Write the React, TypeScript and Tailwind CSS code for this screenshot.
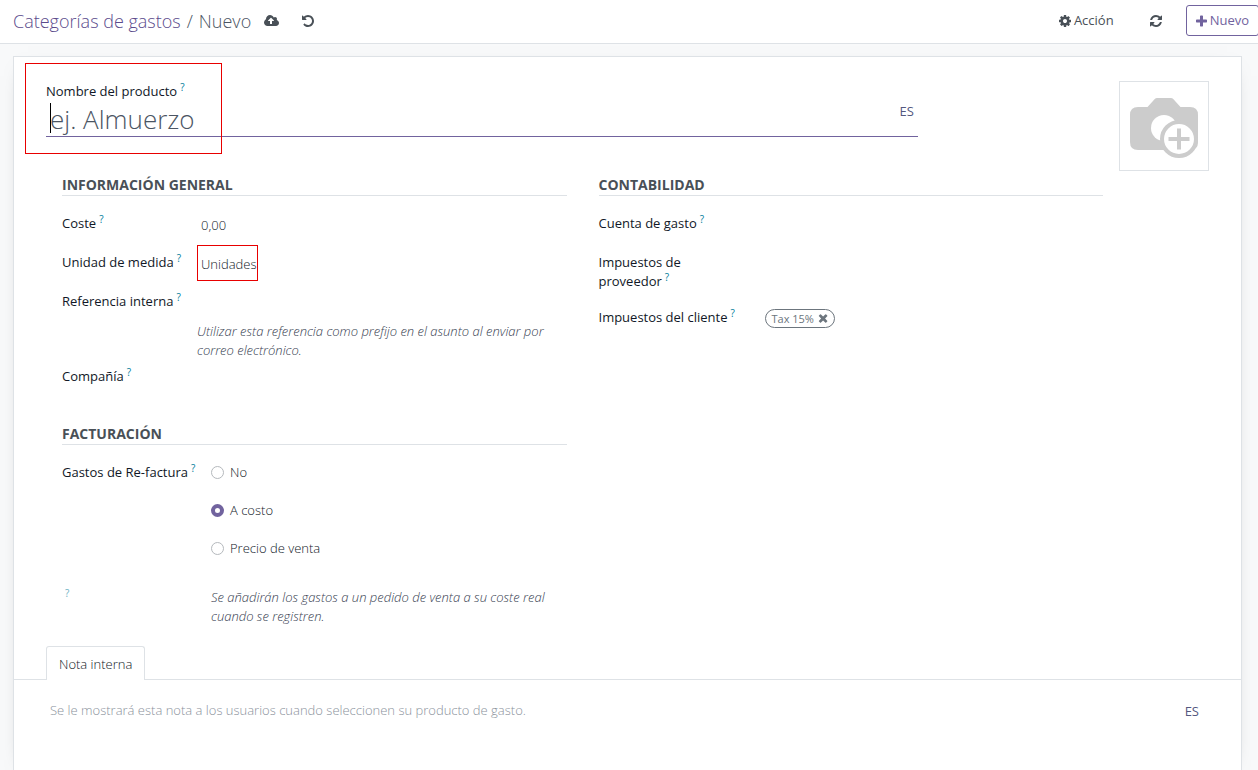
import { useState, type ReactNode } from "react";

const ICONS = {
  cloudUpload: {
    width: 1920,
    d: "M1280 864q0-14-9-23l-352-352q-9-9-23-9t-23 9l-351 351q-10 12-10 24 0 14 9 23t23 9h224v352q0 13 9.500 22.500t22.500 9.500h192q13 0 22.500-9.500t9.500-22.500v-352h224q13 0 22.500-9.500t9.500-22.500zM1920 1152q0 159-112.500 271.500t-271.500 112.500h-1088q-185 0-316.500-131.500t-131.500-316.500q0-130 70-240t188-165q-2-30-2-43 0-212 150-362t362-150q156 0 285.500 87t188.500 231q71-62 166-62 106 0 181 75t75 181q0 76-41 138 130 31 213.500 135.500t83.500 238.500z",
  },
  undo: {
    width: 1536,
    d: "M1536 896q0 156-61 298t-164 245-245 164-298 61q-172 0-327-72.500t-264-204.500q-7-10-6.500-22.500t8.500-20.500l137-138q10-9 25-9 16 2 23 12 73 95 179 147t225 52q104 0 198.500-40.500t163.500-109.500 109.500-163.500 40.500-198.500-40.500-198.500-109.500-163.500-163.500-109.500-198.500-40.500q-98 0-188 35.500t-160 101.500l137 138q31 30 14 69-17 40-59 40h-448q-26 0-45-19t-19-45v-448q0-42 40-59 39-17 69 14l130 129q107-101 244.500-156.500t284.500-55.500q156 0 298 61t245 164 164 245 61 298z",
  },
  refresh: {
    width: 1536,
    d: "M1511 1056q0 5-1 7-64 268-268 434.500t-478 166.500q-146 0-282.500-55t-243.500-157l-129 129q-19 19-45 19t-45-19-19-45v-448q0-26 19-45t45-19h448q26 0 45 19t19 45-19 45l-137 137q71 66 161 102t187 36q134 0 250-65t186-179q11-17 53-117 8-23 30-23h192q13 0 22.500 9.500t9.500 22.500zM1536 256v448q0 26-19 45t-45 19h-448q-26 0-45-19t-19-45 19-45l138-138q-148-137-349-137-134 0-250 65t-186 179q-11 17-53 117-8 23-30 23h-199q-13 0-22.500-9.500t-9.500-22.500v-7q65-268 270-434.500t480-166.500q146 0 284 55.500t245 156.500l130-129q19-19 45-19t45 19 19 45z",
  },
  gear: {
    width: 1536,
    d: "M1024 896q0-106-75-181t-181-75-181 75-75 181 75 181 181 75 181-75 75-181zM1536 787v222q0 12-8 23t-20 13l-185 28q-19 54-39 91 35 50 107 138 10 12 10 25t-9 23q-27 37-99 108t-94 71q-12 0-26-9l-138-108q-44 23-91 38-16 136-29 186-7 28-36 28h-222q-14 0-24.500-8.500t-11.500-21.500l-28-184q-49-16-90-37l-141 107q-10 9-25 9-14 0-25-11-126-114-165-168-7-10-7-23 0-12 8-23 15-21 51-66.500t54-70.500q-27-50-41-99l-183-27q-13-2-21-12.500t-8-23.500v-222q0-12 8-23t19-13l186-28q14-46 39-92-40-57-107-138-10-12-10-24 0-10 9-23 26-36 98.500-107.500t94.500-71.500q13 0 26 10l138 107q44-23 91-38 16-136 29-186 7-28 36-28h222q14 0 24.500 8.500t11.500 21.500l28 184q49 16 90 37l142-107q9-9 24-9 13 0 25 10 129 119 165 170 7 8 7 22 0 12-8 23-15 21-51 66.500t-54 70.500q26 50 41 98l183 28q13 2 21 12.500t8 23.500z",
  },
  plus: {
    width: 1408,
    d: "M1408 800v192q0 40-28 68t-68 28h-416v416q0 40-28 68t-68 28h-192q-40 0-68-28t-28-68v-416h-416q-40 0-68-28t-28-68v-192q0-40 28-68t68-28h416v-416q0-40 28-68t68-28h192q40 0 68 28t28 68v416h416q40 0 68 28t28 68z",
  },
  times: {
    width: 1408,
    d: "M1298 1258q0 40-28 68l-136 136q-28 28-68 28t-68-28l-294-294-294 294q-28 28-68 28t-68-28l-136-136q-28-28-28-68t28-68l294-294-294-294q-28-28-28-68t28-68l136-136q28-28 68-28t68 28l294 294 294-294q28-28 68-28t68 28l136 136q28 28 28 68t-28 68l-294 294 294 294q28 28 28 68z",
  },
};

function Icon({ name, className = "h-3.5" }: { name: keyof typeof ICONS; className?: string }) {
  const icon = ICONS[name];
  return (
    <svg viewBox={`0 0 ${icon.width} 1792`} className={`${className} w-auto fill-current`} aria-hidden="true">
      <path d={icon.d} />
    </svg>
  );
}

function Help() {
  return <sup className="top-0 ml-[3px] align-super text-[10px] leading-none font-normal text-[#017e9b]">?</sup>;
}

function Label({ htmlFor, children }: { htmlFor: string; children: ReactNode }) {
  return (
    <label htmlFor={htmlFor} className="block font-medium text-[#111827]">
      {children}
      <Help />
    </label>
  );
}

function SectionTitle({ children }: { children: ReactNode }) {
  return (
    <h2 className="border-b border-[#dee2e6] text-sm leading-5 font-bold text-[#495057] uppercase">{children}</h2>
  );
}

const policies = ["No", "A costo", "Precio de venta"];

export default function App() {
  const [policy, setPolicy] = useState("A costo");

  return (
    <div className="flex min-h-screen flex-col overflow-x-hidden bg-[#f8f9fa] font-['Open_Sans','Noto_Sans',sans-serif] text-[13px] leading-[19px] font-light text-[#111827]">
      <header className="flex h-11 items-center border-b border-[#dee2e6] bg-white pb-0.5 pl-[13px]">
        <nav className="flex gap-1.5 text-lg leading-7" aria-label="Ruta">
          <a href="#categorias" className="text-[#5b4b8c]">Categorías de gastos</a>
          <span className="text-[#4b5563]">/</span>
          <span className="text-[#4b5563]">Nuevo</span>
        </nav>
        <button type="button" aria-label="Guardar" className="ml-[13px] text-[#495057]">
          <Icon name="cloudUpload" />
        </button>
        <button type="button" aria-label="Descartar" className="ml-[23px] text-[#495057]">
          <Icon name="undo" />
        </button>
        <button type="button" className="ml-auto flex items-center gap-[3px] font-medium text-[#495057]">
          <Icon name="gear" />
          Acción
        </button>
        <button type="button" aria-label="Recargar" className="ml-9 text-[#495057]">
          <Icon name="refresh" />
        </button>
        <button
          type="button"
          className="-mr-px ml-6 flex h-[31px] items-center gap-[3px] rounded-[3px] border border-[#71639e] px-[9px] font-medium text-[#71639e]"
        >
          <Icon name="plus" />
          Nuevo
        </button>
      </header>

      <main className="mt-3 mr-4 ml-[13px] flex flex-1 flex-col border border-b-0 border-[#dee2e6] bg-white shadow-[0_5px_20px_-15px_rgba(0,0,0,0.5)]">
        <div className="flex items-start px-8">
          <div className="min-w-0 flex-1 pt-[25px]">
            <div className="relative w-13/16">
              <Label htmlFor="name">Nombre del producto</Label>
              <div className="flex h-9 items-center border-b border-[#71639e] pr-1">
                <input
                  id="name"
                  placeholder="ej. Almuerzo"
                  className="min-w-0 flex-1 bg-transparent px-1 text-[26px] leading-8 outline-none placeholder:text-[#4b5563]"
                />
                <span className="absolute bottom-1 left-1 h-[30px] w-px bg-black" />
                <button type="button" className="pb-3.5 font-normal text-[#54587f]">ES</button>
              </div>
              <span className="pointer-events-none absolute -top-[19px] -left-[21px] h-[91px] w-[197px] border border-[#e80000]" />
            </div>

            <div className="mt-[38px] grid grid-cols-2 gap-x-8 px-4">
              <section>
                <SectionTitle>Información general</SectionTitle>
                <div className="mt-[18px] grid grid-cols-[135px_1fr]">
                  <Label htmlFor="cost">Coste</Label>
                  <input id="cost" defaultValue="0,00" className="mt-0.5 mb-[18px] h-[19px] px-1 outline-none" />
                  <Label htmlFor="uom">Unidad de medida</Label>
                  <div className="-mt-2 flex h-9 w-[61px] border border-[#e80000]">
                    <input id="uom" defaultValue="Unidades" className="min-w-0 flex-1 pt-0.5 pl-[3px] outline-none" />
                  </div>
                  <div className="pt-[11px]">
                    <Label htmlFor="ref">Referencia interna</Label>
                  </div>
                  <input id="ref" className="h-[30px] px-1 outline-none" />
                  <p className="col-start-2 mt-2.5 text-[#374151] italic">
                    Utilizar esta referencia como prefijo en el asunto al enviar por correo electrónico.
                  </p>
                  <div className="col-start-1 mt-[7px]">
                    <Label htmlFor="company">Compañía</Label>
                  </div>
                  <input id="company" className="mt-[7px] h-[19px] px-1 outline-none" />
                </div>
              </section>

              <section>
                <SectionTitle>Contabilidad</SectionTitle>
                <div className="mt-[18px] grid grid-cols-[142px_1fr] items-start gap-x-6">
                  <Label htmlFor="account">Cuenta de gasto</Label>
                  <input id="account" className="mb-5 h-[19px] outline-none" />
                  <Label htmlFor="supplier-tax">Impuestos de proveedor</Label>
                  <input id="supplier-tax" className="mb-[17px] h-[38px] outline-none" />
                  <Label htmlFor="customer-tax">Impuestos del cliente</Label>
                  <div className="mt-px flex">
                    <span className="flex h-[19px] items-center gap-1 rounded-full border border-[#6c757d] px-1.5 text-[11px] font-normal text-[#6c757d]">
                      Tax 15%
                      <button id="customer-tax" type="button" aria-label="Quitar Tax 15%">
                        <Icon name="times" className="h-[13px]" />
                      </button>
                    </span>
                  </div>
                </div>
              </section>

              <section className="mt-[38px]">
                <SectionTitle>Facturación</SectionTitle>
                <div className="mt-[18px] grid grid-cols-[149px_1fr]">
                  <Label htmlFor="policy-0">Gastos de Re-factura</Label>
                  <div className="flex flex-col gap-[19px]">
                    {policies.map((name, i) => (
                      <label key={name} className="flex items-center gap-1.5">
                        <input
                          id={`policy-${i}`}
                          type="radio"
                          name="policy"
                          checked={policy === name}
                          onChange={() => setPolicy(name)}
                          className="size-[13px] appearance-none rounded-full border border-[#b5b9bd] bg-white checked:border-4 checked:border-[#71639e]"
                        />
                        {name}
                      </label>
                    ))}
                  </div>
                  <div className="mt-[30px] opacity-60">
                    <Help />
                  </div>
                  <p className="mt-[30px] text-[#374151] italic">
                    Se añadirán los gastos a un pedido de venta a su coste real cuando se registren.
                  </p>
                </div>
              </section>
            </div>
          </div>
          <button type="button" aria-label="Añadir imagen" className="mt-6 size-[90px] shrink-0 border border-[#dee2e6]">
            <svg viewBox="0 0 88 88" className="size-full" aria-hidden="true">
              <path
                d="M18 25h9.500l7.500-8.200q.8-.8 2-.8h14q1.200 0 2 .8l7.500 8.200H70q8 0 8 8v27q0 8-8 8H18q-8 0-8-8V33q0-8 8-8z"
                fill="#ccc"
              />
              <circle cx="44" cy="46" r="13" fill="#fff" />
              <circle cx="59" cy="57" r="17" fill="#fff" stroke="#ccc" strokeWidth="4" />
              <path d="M59 46.500v21M48.500 57h21" stroke="#ccc" strokeWidth="4" />
            </svg>
          </button>
        </div>

        <div role="tablist" className="mt-5 flex border-b border-[#dee2e6] pl-8">
          <button
            type="button"
            role="tab"
            aria-selected="true"
            className="-mb-px h-[34px] rounded-t-[3px] border border-b-0 border-[#dee2e6] bg-white px-3 pt-0.5"
          >
            Nota interna
          </button>
        </div>
        <div className="flex items-start px-9 pt-[21px]">
          <textarea
            aria-label="Nota interna"
            placeholder="Se le mostrará esta nota a los usuarios cuando seleccionen su producto de gasto."
            className="h-[60px] min-w-0 flex-1 resize-none outline-none placeholder:text-[#8b929c]"
          />
          <button type="button" className="mt-px mr-1.5 font-normal text-[#54587f]">ES</button>
        </div>
      </main>
    </div>
  );
}
